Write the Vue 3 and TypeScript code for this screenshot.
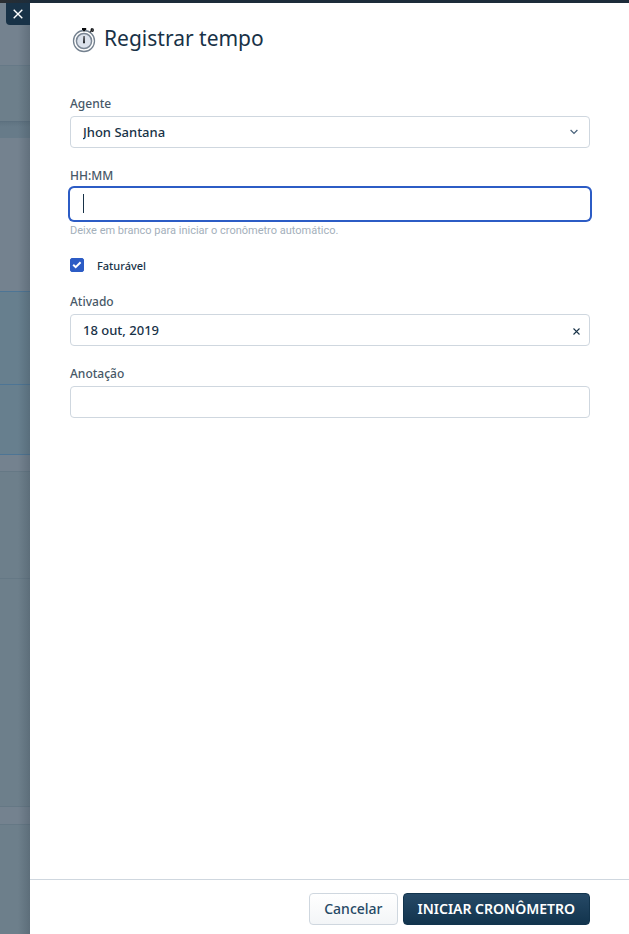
<script setup lang="ts">
import { ref } from 'vue'

const agents: string[] = ['Jhon Santana']
const agent = ref('Jhon Santana')
const duration = ref('')
const billable = ref(true)
const activeOn = ref('18 out, 2019')
const note = ref('')
</script>

<template>
  <div class="screen">
    <div class="topbar"></div>
    <div class="body">
      <aside class="backdrop">
        <div class="band header"></div>
        <div class="band toolbar"></div>
        <div class="band gap"></div>
        <div class="band card"></div>
        <div class="band selected first"></div>
        <div class="band selected second"></div>
        <div class="band strip"></div>
        <div class="band muted upper"></div>
        <div class="band muted lower"></div>
        <div class="band strip edged"></div>
        <div class="band muted rest"></div>
        <button class="close" type="button" aria-label="Fechar">
          <svg width="10" height="10" viewBox="0 0 10 10"><path d="M.7.7l8.6 8.6M9.3.7L.7 9.3" fill="none" stroke="#fff" stroke-width="1.4" /></svg>
        </button>
      </aside>
      <form class="panel" @submit.prevent>
        <header class="heading">
          <svg class="watch" width="28" height="28" viewBox="0 0 28 28" aria-hidden="true">
            <circle cx="14" cy="16" r="10.5" fill="#fff" stroke="#74818f" stroke-width="1.3" />
            <circle cx="14" cy="16" r="7.6" fill="#dce2ec" stroke="#7b8795" stroke-width="1.5" />
            <path d="M12 3.1h4.2v1.8h-1.1v1.4h-2V4.9H12z" fill="#0b0d10" />
            <path d="M20.1 6.7l.6-1.6-.1-1.2 1.2-.9 1.9.8.1 2.4-1.4.8-1.2-.4-.5 1.1z" fill="#0b0d10" />
            <circle cx="22.3" cy="5" r=".6" fill="#aaa" />
            <path d="M13.6 11h.9l.4 7.3h-1.8z" fill="#080a0d" />
          </svg>
          <h1>Registrar tempo</h1>
        </header>

        <div class="fields">
          <div class="field">
            <label for="agent">Agente</label>
            <div class="control">
              <select id="agent" v-model="agent">
                <option v-for="a in agents" :key="a">{{ a }}</option>
              </select>
              <svg class="chevron" width="8" height="6" viewBox="0 0 8 6" aria-hidden="true"><path d="M.6 1L4 4.4 7.4 1" fill="none" stroke="#48617a" stroke-width="1.2" /></svg>
            </div>
          </div>

          <div class="field">
            <label for="duration">HH:MM</label>
            <div class="control">
              <input id="duration" v-model="duration" class="active" type="text" aria-describedby="duration-help" />
              <span v-if="!duration" class="caret"></span>
            </div>
            <p id="duration-help" class="help">Deixe em branco para iniciar o cronômetro automático.</p>
          </div>

          <label class="check" for="billable">
            <input id="billable" v-model="billable" type="checkbox" />
            <svg v-if="billable" class="tick" width="14" height="14" viewBox="0 0 14 14" aria-hidden="true"><path d="M3.2 6.7l2.5 2.5 4.9-4.9" fill="none" stroke="#fff" stroke-width="2" /></svg>
            <span>Faturável</span>
          </label>

          <div class="field">
            <label for="active-on">Ativado</label>
            <div class="control">
              <input id="active-on" v-model="activeOn" type="text" />
              <button class="clear" type="button" aria-label="Limpar data" @click="activeOn = ''">
                <svg width="7" height="7" viewBox="0 0 7 7"><path d="M.5.5l6 6M6.5.5l-6 6" fill="none" stroke="#183247" stroke-width="1.1" /></svg>
              </button>
            </div>
          </div>

          <div class="field">
            <label for="note">Anotação</label>
            <div class="control">
              <input id="note" v-model="note" type="text" />
            </div>
          </div>
        </div>

        <footer class="actions">
          <button class="btn secondary" type="button">Cancelar</button>
          <button class="btn primary" type="submit">INICIAR CRONÔMETRO</button>
        </footer>
      </form>
    </div>
  </div>
</template>

<style>
body {
  margin: 0;
}
</style>

<style scoped>
* {
  box-sizing: border-box;
}
.screen {
  display: flex;
  flex-direction: column;
  min-height: 100vh;
  font-family: "Noto Sans", "Open Sans", sans-serif;
  color: #183247;
}
.topbar {
  height: 3px;
  background: linear-gradient(90deg, #2b2e31, #1d2c3a 30px);
}
.body {
  display: flex;
  flex: 1;
}
.backdrop {
  position: relative;
  display: flex;
  flex-direction: column;
  width: 30px;
  background: #6d7f8b;
}
.backdrop::after {
  content: "";
  position: absolute;
  top: 0;
  right: 0;
  bottom: 0;
  width: 12px;
  background: linear-gradient(90deg, rgba(55, 70, 82, 0), rgba(55, 70, 82, 0.3));
}
.band {
  background: #74828f;
}
.header {
  height: 63px;
  border-bottom: 1px solid #667987;
}
.toolbar {
  height: 56px;
  background: #6d7f8b;
  border-bottom: 1px solid #5c707f;
}
.gap {
  height: 16px;
  background: linear-gradient(#607482, #677b89 5px);
}
.card {
  height: 153px;
}
.selected {
  background: #677f8e;
  border-top: 1px solid #4d7595;
}
.first {
  height: 93px;
}
.second {
  height: 71px;
  border-bottom: 1px solid #4d7595;
}
.strip {
  height: 16px;
}
.edged {
  height: 17px;
}
.muted {
  background: #6d7f8b;
  border-top: 1px solid #657885;
}
.upper {
  height: 107px;
}
.lower {
  height: 229px;
  border-bottom: 1px solid #657885;
}
.rest {
  flex: 1;
}
.close {
  position: absolute;
  z-index: 1;
  top: 0;
  right: 0;
  display: flex;
  align-items: center;
  justify-content: center;
  width: 24px;
  height: 22px;
  padding: 0;
  border: 0;
  border-radius: 0 0 0 4px;
  background: #183247;
}
.panel {
  display: flex;
  flex: 1;
  flex-direction: column;
  background: #fff;
}
.heading {
  display: flex;
  align-items: center;
  gap: 6px;
  height: 72px;
  padding: 0 40px;
}
.watch {
  flex: none;
}
h1 {
  margin: 0;
  padding-bottom: 2px;
  font-size: 21px;
  font-weight: 400;
  line-height: 28px;
}
.fields {
  display: flex;
  flex: 1;
  flex-direction: column;
  gap: 20px;
  padding: 21px 39px 20px 40px;
}
.field {
  display: flex;
  flex-direction: column;
  gap: 4px;
}
.field label {
  align-self: flex-start;
  color: #475867;
  font-size: 12px;
  font-weight: 500;
  line-height: 16px;
}
.control {
  position: relative;
}
.control input,
.control select {
  display: block;
  width: 100%;
  height: 32px;
  margin: 0;
  padding: 0 32px 0 12px;
  border: 1px solid #cfd7df;
  border-radius: 4px;
  outline: 0;
  appearance: none;
  background: #fff;
  color: #183247;
  font: 500 13px/20px "Noto Sans", "Open Sans", sans-serif;
}
.control input:focus,
.control input.active {
  border-color: #fff;
  box-shadow: 0 0 0 2px #2c5cc5;
  caret-color: #183247;
}
.caret {
  position: absolute;
  top: 6px;
  left: 13px;
  width: 1px;
  height: 19px;
  background: #183247;
}
.chevron {
  position: absolute;
  top: 13px;
  right: 12px;
  pointer-events: none;
}
.clear {
  position: absolute;
  top: 8px;
  right: 6px;
  display: flex;
  align-items: center;
  justify-content: center;
  width: 16px;
  height: 18px;
  padding: 0;
  border: 0;
  background: none;
}
.help {
  margin: -2px 0;
  color: #a4b0bb;
  font-family: Roboto, "Noto Sans", sans-serif;
  font-size: 11px;
  line-height: 18px;
}
.check {
  position: relative;
  display: flex;
  align-self: flex-start;
  gap: 13px;
  font-size: 11px;
  font-weight: 500;
  line-height: 16px;
}
.check input {
  width: 14px;
  height: 14px;
  margin: 0;
  border: 1px solid #2c5cc5;
  border-radius: 2px;
  appearance: none;
  background: #fff;
}
.check input:checked {
  background: #2c5cc5;
}
.tick {
  position: absolute;
  top: 0;
  left: 0;
  pointer-events: none;
}
.actions {
  display: flex;
  justify-content: flex-end;
  gap: 5px;
  padding: 13px 39px 9px;
  border-top: 1px solid #cfd7df;
}
.btn {
  height: 32px;
  padding: 0 14px;
  border-radius: 4px;
  font: 500 14px/20px "Noto Sans", "Open Sans", sans-serif;
  white-space: nowrap;
}
.secondary {
  border: 1px solid #cfd7df;
  background: linear-gradient(#fff, #f3f5f7);
  color: #264966;
}
.primary {
  border: 1px solid #12344d;
  background: linear-gradient(#264966, #12344d);
  color: #fff;
  font-weight: 600;
}
</style>
